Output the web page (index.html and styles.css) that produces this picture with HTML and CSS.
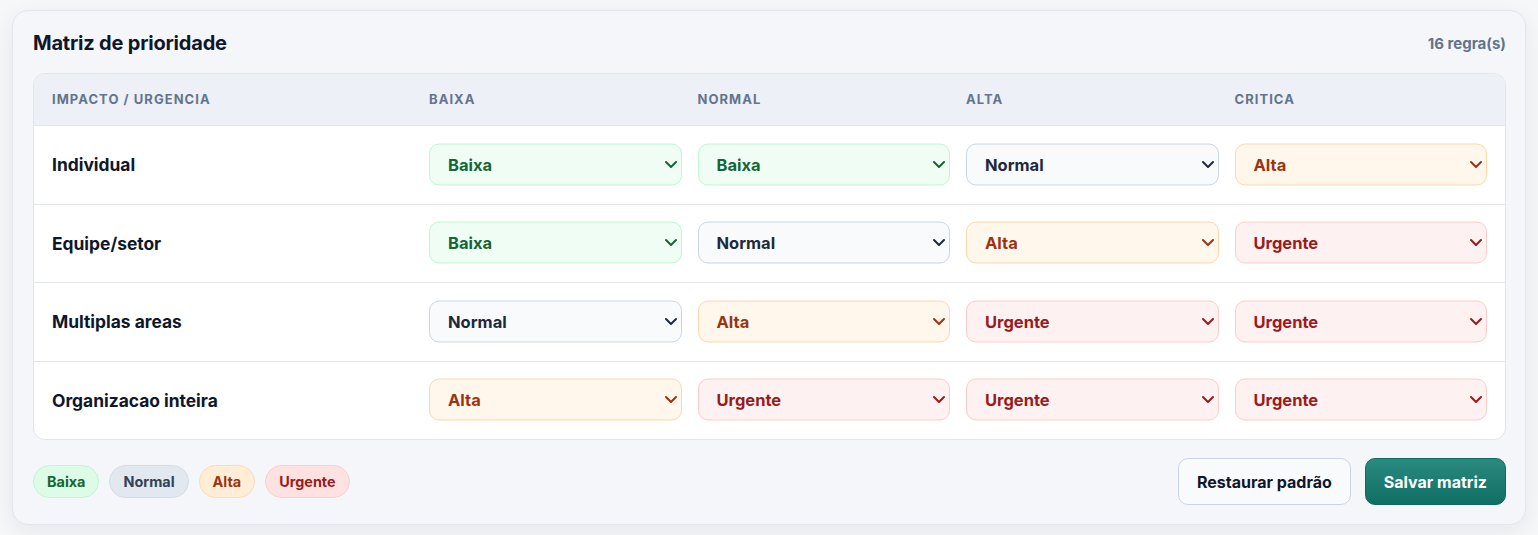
FILE: index.html
```html
<!DOCTYPE html>
<html lang="pt">
<head>
<meta charset="utf-8">
<title>Matriz de prioridade</title>
<link rel="stylesheet" href="styles.css">
</head>
<body>
<section class="card">
  <header class="card-head">
    <h2 class="title">Matriz de prioridade</h2>
    <span class="count">16 regra(s)</span>
  </header>

  <div class="matrix">
    <div class="row head">
      <div class="cell">Impacto / Urgencia</div>
      <div class="cell">Baixa</div>
      <div class="cell">Normal</div>
      <div class="cell">Alta</div>
      <div class="cell">Critica</div>
    </div>

    <div class="row">
      <div class="label">Individual</div>
      <div class="sel baixa"><span>Baixa</span><svg viewBox="0 0 12 8"><path d="M1 1.5 6 6.5l5-5"/></svg></div>
      <div class="sel baixa"><span>Baixa</span><svg viewBox="0 0 12 8"><path d="M1 1.5 6 6.5l5-5"/></svg></div>
      <div class="sel normal"><span>Normal</span><svg viewBox="0 0 12 8"><path d="M1 1.5 6 6.5l5-5"/></svg></div>
      <div class="sel alta"><span>Alta</span><svg viewBox="0 0 12 8"><path d="M1 1.5 6 6.5l5-5"/></svg></div>
    </div>

    <div class="row">
      <div class="label">Equipe/setor</div>
      <div class="sel baixa"><span>Baixa</span><svg viewBox="0 0 12 8"><path d="M1 1.5 6 6.5l5-5"/></svg></div>
      <div class="sel normal"><span>Normal</span><svg viewBox="0 0 12 8"><path d="M1 1.5 6 6.5l5-5"/></svg></div>
      <div class="sel alta"><span>Alta</span><svg viewBox="0 0 12 8"><path d="M1 1.5 6 6.5l5-5"/></svg></div>
      <div class="sel urgente"><span>Urgente</span><svg viewBox="0 0 12 8"><path d="M1 1.5 6 6.5l5-5"/></svg></div>
    </div>

    <div class="row">
      <div class="label">Multiplas areas</div>
      <div class="sel normal"><span>Normal</span><svg viewBox="0 0 12 8"><path d="M1 1.5 6 6.5l5-5"/></svg></div>
      <div class="sel alta"><span>Alta</span><svg viewBox="0 0 12 8"><path d="M1 1.5 6 6.5l5-5"/></svg></div>
      <div class="sel urgente"><span>Urgente</span><svg viewBox="0 0 12 8"><path d="M1 1.5 6 6.5l5-5"/></svg></div>
      <div class="sel urgente"><span>Urgente</span><svg viewBox="0 0 12 8"><path d="M1 1.5 6 6.5l5-5"/></svg></div>
    </div>

    <div class="row">
      <div class="label">Organizacao inteira</div>
      <div class="sel alta"><span>Alta</span><svg viewBox="0 0 12 8"><path d="M1 1.5 6 6.5l5-5"/></svg></div>
      <div class="sel urgente"><span>Urgente</span><svg viewBox="0 0 12 8"><path d="M1 1.5 6 6.5l5-5"/></svg></div>
      <div class="sel urgente"><span>Urgente</span><svg viewBox="0 0 12 8"><path d="M1 1.5 6 6.5l5-5"/></svg></div>
      <div class="sel urgente"><span>Urgente</span><svg viewBox="0 0 12 8"><path d="M1 1.5 6 6.5l5-5"/></svg></div>
    </div>
  </div>

  <footer class="card-foot">
    <div class="legend">
      <span class="pill baixa">Baixa</span>
      <span class="pill normal">Normal</span>
      <span class="pill alta">Alta</span>
      <span class="pill urgente">Urgente</span>
    </div>
    <div class="actions">
      <button class="btn ghost" type="button">Restaurar padrão</button>
      <button class="btn primary" type="button">Salvar matriz</button>
    </div>
  </footer>
</section>
</body>
</html>
```

FILE: styles.css
```css
* { box-sizing: border-box; }

html, body { height: 100%; }

body {
  margin: 0;
  padding: 10px 12px;
  background: #f6f7f9;
  font-family: Inter, "Noto Sans", "Liberation Sans", sans-serif;
  color: #0f172a;
}

.card {
  background: #f5f6fa;
  border: 1px solid #e2e5ee;
  border-radius: 16px;
  padding: 18px 19px 19px 20px;
  box-shadow: 0 6px 22px rgba(15, 23, 42, 0.07);
}

.card-head {
  display: flex;
  align-items: center;
  justify-content: space-between;
  height: 26px;
  margin-bottom: 18px;
}

.title {
  margin: 0;
  font-size: 20px;
  line-height: 26px;
  font-weight: 700;
  letter-spacing: -0.01em;
  color: #0f172a;
  transform: translateY(1px);
}

.count {
  font-size: 15px;
  font-weight: 700;
  color: #64748b;
  transform: translateY(1px);
}

.matrix {
  background: #ffffff;
  border: 1px solid #e2e5ee;
  border-radius: 12px;
  overflow: hidden;
}

.row {
  display: grid;
  grid-template-columns: 1.43fr repeat(4, 1fr);
  column-gap: 16px;
  align-items: center;
  padding: 0 18px 0 18px;
  height: 78.5px;
  border-top: 1px solid #e3e6ee;
}

.row.head {
  height: 51px;
  border-top: none;
  background: #edf0f7;
}

.head .cell {
  font-size: 13px;
  font-weight: 700;
  text-transform: uppercase;
  letter-spacing: 0.08em;
  color: #64748b;
  transform: translateY(-1px);
}

.label {
  font-size: 17.4px;
  font-weight: 700;
  color: #0f172a;
}

.sel {
  display: flex;
  align-items: center;
  justify-content: space-between;
  height: 42px;
  padding: 0 4px 0 18px;
  border: 1px solid;
  border-radius: 10px;
  font-size: 16.5px;
  font-weight: 700;
  transform: translateY(-0.5px);
}

.sel svg {
  width: 12px;
  height: 8px;
  fill: none;
  stroke: currentColor;
  stroke-width: 2;
  stroke-linecap: round;
  stroke-linejoin: round;
}

.sel.baixa { background: #effdf4; border-color: #bbf7d0; color: #166534; }
.sel.normal { background: #f8fafc; border-color: #cbd5e1; color: #1e293b; }
.sel.alta { background: #fff6ec; border-color: #fed7aa; color: #9a3412; }
.sel.urgente { background: #fef1f1; border-color: #fecaca; color: #991b1b; }

.card-foot {
  display: flex;
  align-items: center;
  justify-content: space-between;
  margin-top: 18px;
}

.legend {
  display: flex;
  gap: 10px;
}

.pill {
  display: inline-flex;
  align-items: center;
  height: 33px;
  padding: 0 13px;
  border: 1px solid;
  border-radius: 999px;
  font-size: 14.4px;
  font-weight: 700;
}

.pill.baixa { background: #dcfce7; border-color: #c4f3d4; color: #166534; }
.pill.normal { background: #e2e8f0; border-color: #d5dce6; color: #334155; }
.pill.alta { background: #ffedd5; border-color: #fbdcb4; color: #9a3412; }
.pill.urgente { background: #fee2e2; border-color: #f9cfcf; color: #991b1b; }

.actions {
  display: flex;
  gap: 14px;
}

.btn {
  height: 47px;
  border-radius: 10px;
  font-family: inherit;
  font-size: 16px;
  font-weight: 700;
  cursor: pointer;
}

.btn.ghost {
  padding: 0 18px;
  background: #f8fafc;
  border: 1px solid #cbd5e1;
  color: #0f172a;
}

.btn.primary {
  padding: 0 18px;
  background: linear-gradient(180deg, #2a8a7f 0%, #0f6f65 100%);
  border: 1px solid #0f6a60;
  color: #ffffff;
}
```
